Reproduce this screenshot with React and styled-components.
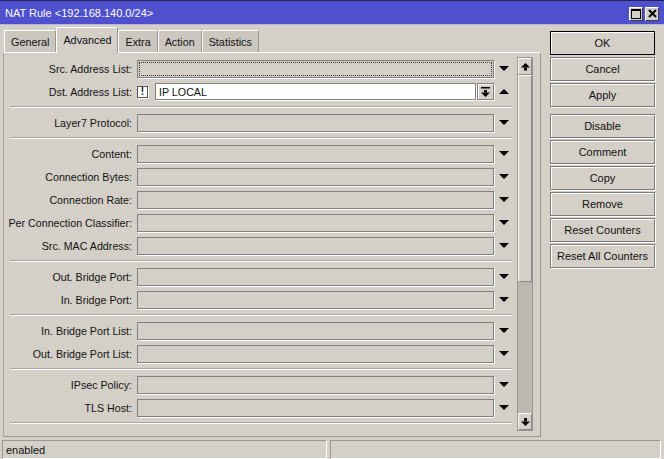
import React from 'react';
import styled, { createGlobalStyle } from 'styled-components';

const bg = '#d4d0c8';
const shade = '#808080';

const GlobalStyle = createGlobalStyle`
    body {
        margin: 0;
        background: ${bg};
        font-family: "Liberation Sans", Arial, sans-serif;
        font-size: 11px;
        color: #111;
    }
`

const Window = styled.div`
    width: 664px;
    height: 459px;
    display: flex;
    flex-direction: column;
    background: ${bg};
    overflow: hidden;
`

const TitleBar = styled.div`
    height: 25px;
    box-sizing: border-box;
    background: #4f50cd;
    border-top: 1px solid #23235a;
    border-bottom: 1px solid #b9b6d8;
    display: flex;
    align-items: center;
    justify-content: space-between;
    padding: 0 5px 0 5px;
    color: #fff;
    font-size: 11px;
`

const TitleButtons = styled.div`
    display: flex;
    gap: 2px;
    margin-top: 2px;
`

const TitleButton = styled.div`
    width: 14px;
    height: 14px;
    box-sizing: border-box;
    background: ${bg};
    border: 1px solid;
    border-color: #fff #404040 #404040 #fff;
    display: flex;
    align-items: center;
    justify-content: center;
`

const Body = styled.div`
    display: flex;
    padding: 2px 0 0 3px;
`

const LeftColumn = styled.div`
    width: 538px;
    display: flex;
    flex-direction: column;
`

const TabBar = styled.div`
    height: 25px;
    display: flex;
    align-items: flex-end;
    padding-left: 1px;
    font-size: 10.8px;
`

const Tab = styled.div`
    position: relative;
    z-index: ${p => (p.active ? 1 : 0)};
    height: ${p => (p.active ? '26px' : '22px')};
    margin-bottom: ${p => (p.active ? '-1px' : '0')};
    box-sizing: border-box;
    padding: 0 6px;
    display: flex;
    align-items: ${p => (p.active ? 'flex-start' : 'center')};
    padding-top: ${p => (p.active ? '6px' : '1px')};
    background: ${p => (p.active ? bg : '#cbc7bf')};
    border-top: 1px solid #fff;
    border-left: 1px solid #fff;
    border-right: 1px solid #9a968f;
`

const Panel = styled.div`
    height: 385px;
    box-sizing: border-box;
    border: 1px solid;
    border-color: #fff #9a968f #9a968f #a8a49d;
    padding: 4px 7px 5px 0;
    display: flex;
    gap: 3px;
`

const Rows = styled.div`
    width: 510px;
    display: flex;
    flex-direction: column;
`

const Row = styled.div`
    height: 23px;
    display: flex;
    align-items: center;
    flex-shrink: 0;
`

const Label = styled.div`
    width: 129px;
    box-sizing: border-box;
    padding-right: 1px;
    text-align: right;
    white-space: nowrap;
    font-size: 10.7px;
`

const Field = styled.div`
    flex: 1;
    height: 18px;
    margin-left: 4px;
    box-sizing: border-box;
    border: 1px solid ${shade};
    box-shadow: 1px 1px 0 #fff;
    padding: 1px;
    display: flex;
`

const Focus = styled.div`
    flex: 1;
    border: 1px dotted #333;
`

const FieldGroup = styled.div`
    flex: 1;
    margin-left: 4px;
    display: flex;
    align-items: center;
`

const NotToggle = styled.div`
    width: 11px;
    height: 12px;
    box-sizing: border-box;
    background: #fff;
    border: 1px solid #555;
    box-shadow: 1px 1px 0 #fff;
    display: flex;
    align-items: center;
    justify-content: center;
    font-weight: bold;
    font-size: 10px;
    margin-right: 7px;
`

const TextInput = styled.div`
    flex: 1;
    height: 17px;
    box-sizing: border-box;
    background: #fff;
    border: 1px solid ${shade};
    box-shadow: 1px 1px 0 #fff;
    padding: 0 3px;
    display: flex;
    align-items: center;
    font-size: 10.7px;
`

const DropButton = styled.div`
    width: 17px;
    height: 17px;
    margin-left: 1px;
    box-sizing: border-box;
    border: 1px solid ${shade};
    box-shadow: inset 1px 1px 0 #fff, 1px 1px 0 #fff;
    display: flex;
    align-items: center;
    justify-content: center;
`

const ArrowCell = styled.div`
    width: 20px;
    display: flex;
    justify-content: center;
    align-items: center;
`

const Separator = styled.div`
    height: 8px;
    flex-shrink: 0;
    display: flex;
    align-items: center;
    padding: 0 2px 0 6px;
    &::after {
        content: '';
        flex: 1;
        border-top: 1px solid #a8a49d;
        border-bottom: 1px solid #fff;
    }
`

const Scrollbar = styled.div`
    width: 16px;
    box-sizing: border-box;
    border: 1px solid #9a968f;
    display: flex;
    flex-direction: column;
    background: #bcb8b0;
`

const ScrollButton = styled.div`
    height: 17px;
    flex-shrink: 0;
    box-sizing: border-box;
    background: ${bg};
    border: 1px solid;
    border-color: #fff #888 #888 #fff;
    display: flex;
    align-items: center;
    justify-content: center;
`

const Thumb = styled.div`
    height: 207px;
    box-sizing: border-box;
    background: ${bg};
    border: 1px solid;
    border-color: #fff #888 #888 #fff;
`

const Track = styled.div`
    flex: 1;
`

const RightColumn = styled.div`
    width: 105px;
    margin-left: 9px;
    padding-top: 4px;
    display: flex;
    flex-direction: column;
    gap: 2px;
`

const Button = styled.div`
    height: 24px;
    box-sizing: border-box;
    display: flex;
    align-items: center;
    justify-content: center;
    border: 1px solid ${p => (p.primary ? '#000' : '#7a7a7a')};
    box-shadow: ${p => (p.primary ? 'inset 1px 1px 0 #fff' : 'inset 1px 1px 0 #fff, 1px 1px 0 #fff')};
    margin-top: ${p => (p.spaced ? '5px' : '0')};
`

const StatusBar = styled.div`
    height: 19px;
    margin-top: 3px;
    display: flex;
    gap: 3px;
    padding: 0 3px 0 2px;
`

const StatusPane = styled.div`
    width: ${p => (p.wide ? 'auto' : '325px')};
    flex: ${p => (p.wide ? 1 : 'none')};
    box-sizing: border-box;
    border: 1px solid;
    border-color: #9a968f #fff #fff #9a968f;
    padding: 0 3px;
    display: flex;
    align-items: center;
`

const Down = () => (
    <svg width="10" height="5" viewBox="0 0 10 5"><polygon points="0,0 10,0 5,5" fill="#000" /></svg>
)

const Up = () => (
    <svg width="10" height="5" viewBox="0 0 10 5"><polygon points="0,5 10,5 5,0" fill="#000" /></svg>
)

const DropGlyph = () => (
    <svg width="9" height="10" viewBox="0 0 9 10">
        <rect x="0" y="0" width="9" height="1.5" fill="#000" />
        <rect x="3" y="3" width="3" height="2.5" fill="#000" />
        <polygon points="0,5.5 9,5.5 4.5,10" fill="#000" />
    </svg>
)

const ScrollUpGlyph = () => (
    <svg width="9" height="8" viewBox="0 0 9 8">
        <polygon points="4.5,0 9,4.5 0,4.5" fill="#000" />
        <rect x="3" y="4.5" width="3" height="3" fill="#000" />
    </svg>
)

const ScrollDownGlyph = () => (
    <svg width="9" height="8" viewBox="0 0 9 8">
        <rect x="3" y="0" width="3" height="3.5" fill="#000" />
        <polygon points="0,3.5 9,3.5 4.5,8" fill="#000" />
    </svg>
)

const MaxGlyph = () => (
    <svg width="10" height="10" viewBox="0 0 10 10">
        <rect x="0.5" y="0.5" width="9" height="9" fill="none" stroke="#000" />
        <rect x="0" y="0" width="10" height="2" fill="#000" />
    </svg>
)

const CloseGlyph = () => (
    <svg width="9" height="9" viewBox="0 0 9 9">
        <path d="M1 1 L8 8 M8 1 L1 8" stroke="#000" strokeWidth="2" />
    </svg>
)

const tabs = ['General', 'Advanced', 'Extra', 'Action', 'Statistics'];

// '-' marks a separator line between groups of rows
const layout = [
    'Src. Address List', 'Dst. Address List', '-',
    'Layer7 Protocol', '-',
    'Content', 'Connection Bytes', 'Connection Rate', 'Per Connection Classifier', 'Src. MAC Address', '-',
    'Out. Bridge Port', 'In. Bridge Port', '-',
    'In. Bridge Port List', 'Out. Bridge Port List', '-',
    'IPsec Policy', 'TLS Host', '-',
];

const buttons = [
    { label: 'OK', primary: true },
    { label: 'Cancel' },
    { label: 'Apply' },
    { label: 'Disable', spaced: true },
    { label: 'Comment' },
    { label: 'Copy' },
    { label: 'Remove' },
    { label: 'Reset Counters' },
    { label: 'Reset All Counters' },
];

const FormRow = ({ name }) => {
    if (name === 'Dst. Address List') {
        return (
            <Row>
                <Label>{name}:</Label>
                <FieldGroup>
                    <NotToggle>!</NotToggle>
                    <TextInput>IP LOCAL</TextInput>
                    <DropButton><DropGlyph /></DropButton>
                </FieldGroup>
                <ArrowCell><Up /></ArrowCell>
            </Row>
        )
    }
    return (
        <Row>
            <Label>{name}:</Label>
            <Field>{name === 'Src. Address List' && <Focus />}</Field>
            <ArrowCell><Down /></ArrowCell>
        </Row>
    )
}

export default function App() {
    return (
        <>
            <GlobalStyle />
            <Window>
                <TitleBar>
                    <span>NAT Rule &lt;192.168.140.0/24&gt;</span>
                    <TitleButtons>
                        <TitleButton><MaxGlyph /></TitleButton>
                        <TitleButton><CloseGlyph /></TitleButton>
                    </TitleButtons>
                </TitleBar>
                <Body>
                    <LeftColumn>
                        <TabBar>
                            {tabs.map(t => <Tab key={t} active={t === 'Advanced'}>{t}</Tab>)}
                        </TabBar>
                        <Panel>
                            <Rows>
                                {layout.map((name, i) =>
                                    name === '-' ? <Separator key={i} /> : <FormRow key={i} name={name} />
                                )}
                            </Rows>
                            <Scrollbar>
                                <ScrollButton><ScrollUpGlyph /></ScrollButton>
                                <Thumb />
                                <Track />
                                <ScrollButton><ScrollDownGlyph /></ScrollButton>
                            </Scrollbar>
                        </Panel>
                    </LeftColumn>
                    <RightColumn>
                        {buttons.map(b => (
                            <Button key={b.label} primary={b.primary} spaced={b.spaced}>{b.label}</Button>
                        ))}
                    </RightColumn>
                </Body>
                <StatusBar>
                    <StatusPane>enabled</StatusPane>
                    <StatusPane wide />
                </StatusBar>
            </Window>
        </>
    )
}
